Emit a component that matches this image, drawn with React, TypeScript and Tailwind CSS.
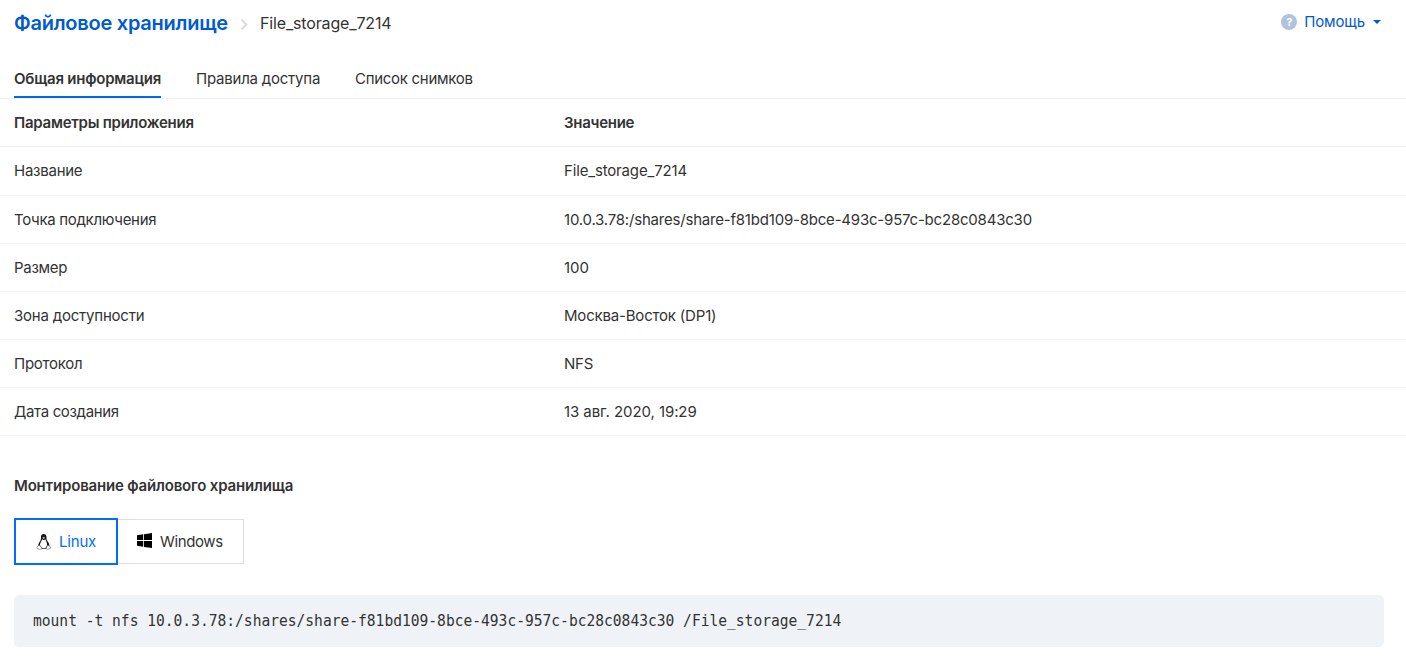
import React from "react";

const rows = [
  ["Название", "File_storage_7214", "h-[49px] tracking-[-0.25px]", "tracking-[-0.16px]"],
  ["Точка подключения", "10.0.3.78:/shares/share-f81bd109-8bce-493c-957c-bc28c0843c30", "h-12 tracking-[-0.3px]", "tracking-[-0.205px]"],
  ["Размер", "100", "h-12 tracking-[-0.3px]", "tracking-normal"],
  ["Зона доступности", "Москва-Восток (DP1)", "h-12 tracking-[-0.21px]", "tracking-[-0.19px]"],
  ["Протокол", "NFS", "h-12 tracking-[-0.25px]", "tracking-[-0.25px]"],
  ["Дата создания", "13 авг. 2020, 19:29", "h-12 tracking-[-0.34px]", "tracking-[-0.08px]"],
];

function Tux() {
  return (
    <svg className="mr-2 h-4 w-4 shrink-0" viewBox="0 0 16 16">
      <path d="M7.700 0C5.900 0 5 1.200 5 3c0 2 0 2.700-1 4.200C3 8.700 2.200 10 2.200 12L4.500 14.700h6.500l2.400-2.700c0-2-.8-3.500-2-5C10.400 5.600 10.500 4.500 10.500 3 10.500 1.200 9.500 0 7.700 0Z" fill="#161616" />
      <path d="M6.200 5.300C5.400 7.500 4 8.800 3.900 11.200L6.400 14.100h3l1.600-2.600C11.300 9 10.300 7.200 9.300 5.300L7.800 6.200Z" fill="#fff" />
      <path d="M6.200 3.700 7.700 3.100 9.200 3.800 7.700 5Z" fill="#cfcfcf" />
      <path d="M2.700 11.500 1 12.800v1.800l3.600 1 1.400-1-1.900-2.900ZM11.300 11.500l-.9 2.900.9 1.200 3.400-1.400-1.100-2.300Z" fill="#fff" stroke="#777" strokeWidth=".7" strokeLinejoin="round" />
    </svg>
  );
}

export default function App() {
  return (
    <main className="flex h-[666px] w-full flex-col overflow-hidden bg-white font-['Inter',sans-serif] text-[15px] leading-6 text-[#333]">
      <header className="flex h-[46px] items-center pr-[25px] pl-[14px]">
        <a className="w-[214px] text-[20px] font-semibold tracking-[-0.24px] whitespace-nowrap text-[#005bd1]">Файловое хранилище</a>
        <svg className="mt-[3px] mr-[12px] ml-[12px] h-[11px] w-[8px]" viewBox="0 0 8 11" fill="none" stroke="#d6d8db" strokeWidth="1.8">
          <path d="M1.500 .7 6.300 5.500 1.500 10.300" />
        </svg>
        <span className="text-[16px] tracking-[-0.15px]">File_storage_7214</span>
        <div className="mb-[2px] ml-auto flex items-center text-[#005bd1]">
          <span className="mr-[7px] flex h-4 w-4 items-center justify-center rounded-full bg-[#b0c3dc] text-[11px] font-bold text-white">?</span>
          <span className="tracking-[-0.15px]">Помощь</span>
          <svg className="ml-[8px] h-1 w-2" viewBox="0 0 8 4" fill="currentColor">
            <path d="M0 0h8L4 4z" />
          </svg>
        </div>
      </header>
      <nav className="flex h-[53px] items-end gap-[35px] border-b border-[#f0f1f5] pl-[14px]">
        <a className="h-[31px] w-[147px] border-b-2 border-[#0068f0] font-semibold tracking-[-0.23px] whitespace-nowrap">Общая информация</a>
        <a className="h-[31px] w-[124px] tracking-[-0.22px] whitespace-nowrap">Правила доступа</a>
        <a className="h-[31px] tracking-[-0.29px]">Список снимков</a>
      </nav>
      <section>
        <div className="flex h-12 items-center border-b border-[#f0f1f5] pl-[14px] font-semibold">
          <span className="w-[550px] tracking-[-0.25px]">Параметры приложения</span>
          <span className="tracking-[-0.27px]">Значение</span>
        </div>
        {rows.map(([name, value, nameClass, valueClass]) => (
          <div key={name} className={`flex items-center border-b border-[#f0f1f5] pl-[14px] ${nameClass}`}>
            <span className="w-[550px]">{name}</span>
            <span className={valueClass}>{value}</span>
          </div>
        ))}
      </section>
      <h2 className="mt-[38px] pl-[14px] font-semibold tracking-[-0.18px]">Монтирование файлового хранилища</h2>
      <div className="mt-5 flex items-center pl-[14px]">
        <button className="flex h-[47px] w-[104px] items-center border-2 border-[#006cff] pl-[20px] text-[#0070f0]">
          <Tux />
          <span className="mt-px -ml-px tracking-[-0.2px]">Linux</span>
        </button>
        <button className="flex h-[45px] w-[126px] items-center border border-l-0 border-[#dcdee0] pl-[19px]">
          <svg className="mr-2 mb-[2px] h-[15px] w-[15px]" viewBox="0 0 15 15">
            <path d="M0 2.200 6.200 1.300V7H0zM7 1.200 15 0v7H7zM0 7.900h6.200v5.800L0 12.800zM7 7.900h8V15l-8-1.100z" />
          </svg>
          <span className="mt-px tracking-[-0.38px]">Windows</span>
        </button>
      </div>
      <pre className="mt-[30px] mr-[22px] ml-[14px] flex h-[52px] items-center rounded-[5px] bg-[#eff3f8] pl-[19px]">
        <code className="origin-left scale-x-[0.912] font-['DejaVu_Sans_Mono',monospace] text-[16px]">mount -t nfs 10.0.3.78:/shares/share-f81bd109-8bce-493c-957c-bc28c0843c30 /File_storage_7214</code>
      </pre>
    </main>
  );
}
